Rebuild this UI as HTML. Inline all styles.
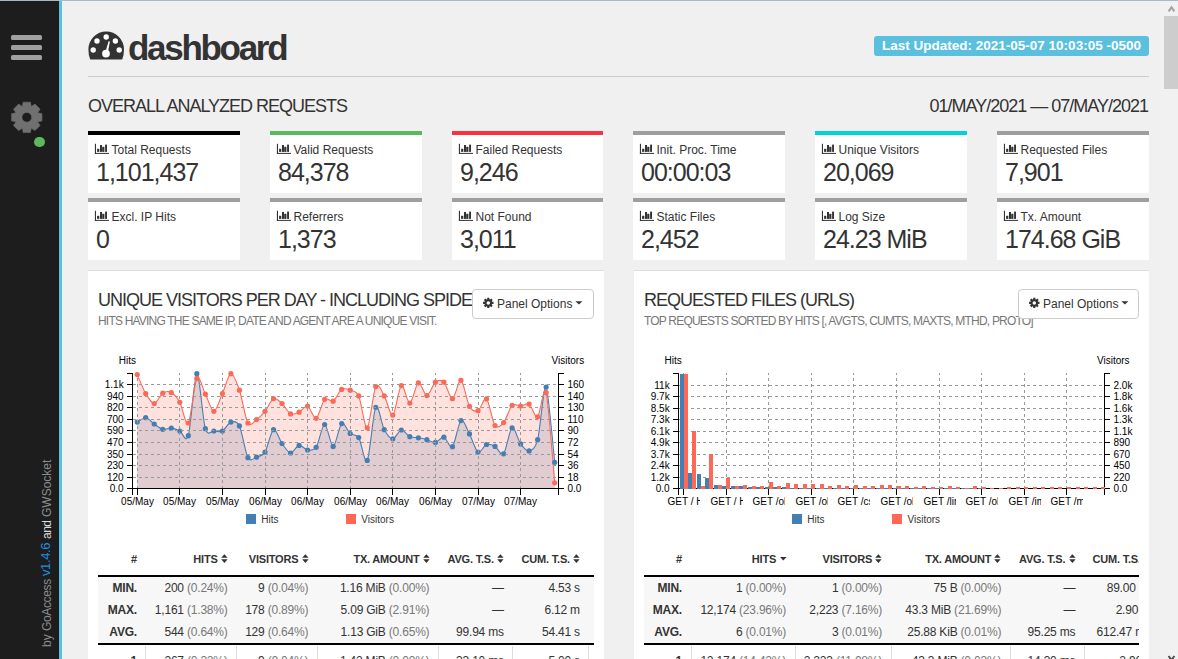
<!DOCTYPE html>
<html><head><meta charset="utf-8">
<style>
*{box-sizing:border-box}
html,body{margin:0;padding:0}
body{width:1178px;height:659px;overflow:hidden;position:relative;background:#f0f0f0;font-family:"Liberation Sans", sans-serif;color:#333}
.abs{position:absolute}
.vt{position:absolute;left:40px;transform:rotate(-90deg);transform-origin:0 0;font-size:12px;line-height:14px;white-space:nowrap}
.card{position:absolute;height:62px;background:#fff;border-top:4px solid #000}
.clab{position:absolute;left:23.5px;top:8px;font-size:12px;line-height:14px;white-space:nowrap}
.cval{position:absolute;left:8px;top:22px;font-size:25px;line-height:30px;letter-spacing:-1px;white-space:nowrap}
.panel{position:absolute;background:#fff;border-top:1px solid #ddd}
.ptitle{position:absolute;font-size:18px;letter-spacing:-1px;white-space:nowrap;line-height:20px}
.psub{position:absolute;font-size:12px;letter-spacing:-0.8px;white-space:nowrap;color:#777;line-height:14px}
.th{position:absolute;top:13px;font-size:11px;line-height:13px;font-weight:bold;white-space:nowrap;letter-spacing:-0.2px}
.td{position:absolute;font-size:12px;line-height:14px;white-space:nowrap;letter-spacing:-0.2px}
.b{font-weight:bold}
.g{color:#777}
.btn{position:absolute;height:30px;border:1px solid #ccc;border-radius:4px;background:#fff;font-size:12px;line-height:28px;white-space:nowrap}
</style></head><body>
<div class="abs" style="left:0;top:0;width:1178px;height:1px;background:#abb9c6"></div>
<div class="abs" style="left:0;top:1px;width:59px;height:658px;background:#1d1d1d"></div>
<div class="abs" style="left:59px;top:1px;width:3px;height:658px;background:#5bc0de"></div>
<div class="abs" style="left:11.2px;top:35px;width:31.2px;height:5px;background:#a0a0a0;border-radius:1.6px"></div>
<div class="abs" style="left:11.2px;top:45px;width:31.2px;height:5px;background:#a0a0a0;border-radius:1.6px"></div>
<div class="abs" style="left:11.2px;top:55.3px;width:31.2px;height:5px;background:#a0a0a0;border-radius:1.6px"></div>
<svg class="abs" style="left:0;top:0" width="59" height="160"><path d="M22.37,106.36L23.17,102.13L30.43,102.13L31.23,106.36L31.40,106.43L34.96,104.00L40.10,109.14L37.67,112.70L37.74,112.87L41.97,113.67L41.97,120.93L37.74,121.73L37.67,121.90L40.10,125.46L34.96,130.60L31.40,128.17L31.23,128.24L30.43,132.47L23.17,132.47L22.37,128.24L22.20,128.17L18.64,130.60L13.50,125.46L15.93,121.90L15.86,121.73L11.63,120.93L11.63,113.67L15.86,112.87L15.93,112.70L13.50,109.14L18.64,104.00L22.20,106.43ZM31.70,117.30A4.9,4.9 0 1 0 21.90,117.30A4.9,4.9 0 1 0 31.70,117.30Z" fill="#707070" fill-rule="evenodd" stroke="#707070" stroke-width="0.6" stroke-linejoin="round"/></svg>
<div class="abs" style="left:34px;top:136.5px;width:10.5px;height:10.5px;border-radius:50%;background:#5cb85c"></div>
<div class="vt" style="top:647px;color:#8c8c8c">by</div>
<div class="vt" style="top:631px;color:#8c8c8c;letter-spacing:-0.35px">GoAccess</div>
<div class="vt" style="left:39px;top:576px;color:#1e90e0;font-size:13px;letter-spacing:-0.4px">v1.4.6</div>
<div class="vt" style="top:539px;color:#dcdcdc;letter-spacing:-0.5px">and</div>
<div class="vt" style="top:517px;color:#8c8c8c;letter-spacing:0px">GWSocket</div>

<!-- header -->
<svg class="abs" style="left:88px;top:31px" width="37" height="29" viewBox="0 0 37 29">
<path d="M18.2,0.5A17.8,17.8 0 0 0 0.4,18.3Q0.4,24 2.2,28.5H34.2Q36,24 36,18.3A17.8,17.8 0 0 0 18.2,0.5Z" fill="#333"/>
<circle cx="18.2" cy="6" r="2.7" fill="#fff"/><circle cx="9" cy="10" r="2.7" fill="#fff"/><circle cx="27.4" cy="10" r="2.7" fill="#fff"/>
<circle cx="5.2" cy="19" r="2.7" fill="#fff"/><circle cx="31.2" cy="19" r="2.7" fill="#fff"/>
<path d="M17,22.5 L20.6,10.2 L21.9,10.4 L19.6,22.8Z" fill="#fff"/><circle cx="18" cy="22.6" r="3.9" fill="#fff"/>
</svg>
<div class="abs" style="left:128px;top:28px;font-size:35px;line-height:40px;font-weight:bold;letter-spacing:-2.3px;white-space:nowrap">dashboard</div>
<div class="abs" style="left:874px;top:36px;width:275px;height:20px;border-radius:3px;background:#5bc0de;color:#fff;font-weight:bold;font-size:13.5px;line-height:20px;text-align:center;white-space:nowrap">Last Updated: 2021-05-07 10:03:05 -0500</div>
<div class="abs" style="left:88px;top:76px;width:1061px;height:1px;background:#ccc"></div>
<div class="abs" style="left:88px;top:96px;font-size:18px;line-height:20px;letter-spacing:-1px;white-space:nowrap">OVERALL ANALYZED REQUESTS</div>
<div class="abs" style="left:880px;top:96px;width:268px;text-align:right;font-size:18px;line-height:20px;letter-spacing:-1px;white-space:nowrap">01/MAY/2021 — 07/MAY/2021</div>
<div class="card" style="left:88px;top:131px;width:152px;border-top-color:#000"><div class="clab">Total Requests</div><div class="cval">1,101,437</div></div>
<svg style="position:absolute;left:94px;top:143px" width="16" height="12" viewBox="0 0 16 12"><g fill="#333"><rect x="0.9" y="0.8" width="1.1" height="10.1"/><rect x="0.9" y="9.9" width="14.1" height="1"/><rect x="3.1" y="5.8" width="2.2" height="3.1"/><rect x="6.0" y="2.0" width="2.0" height="6.9"/><rect x="8.2" y="3.8" width="2.2" height="5.1"/><rect x="11.1" y="1.6" width="1.9" height="7.3"/></g></svg>
<div class="card" style="left:270px;top:131px;width:152px;border-top-color:#5cb85c"><div class="clab">Valid Requests</div><div class="cval">84,378</div></div>
<svg style="position:absolute;left:276px;top:143px" width="16" height="12" viewBox="0 0 16 12"><g fill="#333"><rect x="0.9" y="0.8" width="1.1" height="10.1"/><rect x="0.9" y="9.9" width="14.1" height="1"/><rect x="3.1" y="5.8" width="2.2" height="3.1"/><rect x="6.0" y="2.0" width="2.0" height="6.9"/><rect x="8.2" y="3.8" width="2.2" height="5.1"/><rect x="11.1" y="1.6" width="1.9" height="7.3"/></g></svg>
<div class="card" style="left:452px;top:131px;width:151px;border-top-color:#ff303e"><div class="clab">Failed Requests</div><div class="cval">9,246</div></div>
<svg style="position:absolute;left:458px;top:143px" width="16" height="12" viewBox="0 0 16 12"><g fill="#333"><rect x="0.9" y="0.8" width="1.1" height="10.1"/><rect x="0.9" y="9.9" width="14.1" height="1"/><rect x="3.1" y="5.8" width="2.2" height="3.1"/><rect x="6.0" y="2.0" width="2.0" height="6.9"/><rect x="8.2" y="3.8" width="2.2" height="5.1"/><rect x="11.1" y="1.6" width="1.9" height="7.3"/></g></svg>
<div class="card" style="left:633px;top:131px;width:152px;border-top-color:#9e9e9e"><div class="clab">Init. Proc. Time</div><div class="cval">00:00:03</div></div>
<svg style="position:absolute;left:639px;top:143px" width="16" height="12" viewBox="0 0 16 12"><g fill="#333"><rect x="0.9" y="0.8" width="1.1" height="10.1"/><rect x="0.9" y="9.9" width="14.1" height="1"/><rect x="3.1" y="5.8" width="2.2" height="3.1"/><rect x="6.0" y="2.0" width="2.0" height="6.9"/><rect x="8.2" y="3.8" width="2.2" height="5.1"/><rect x="11.1" y="1.6" width="1.9" height="7.3"/></g></svg>
<div class="card" style="left:815px;top:131px;width:152px;border-top-color:#00d1dc"><div class="clab">Unique Visitors</div><div class="cval">20,069</div></div>
<svg style="position:absolute;left:821px;top:143px" width="16" height="12" viewBox="0 0 16 12"><g fill="#333"><rect x="0.9" y="0.8" width="1.1" height="10.1"/><rect x="0.9" y="9.9" width="14.1" height="1"/><rect x="3.1" y="5.8" width="2.2" height="3.1"/><rect x="6.0" y="2.0" width="2.0" height="6.9"/><rect x="8.2" y="3.8" width="2.2" height="5.1"/><rect x="11.1" y="1.6" width="1.9" height="7.3"/></g></svg>
<div class="card" style="left:997px;top:131px;width:152px;border-top-color:#9e9e9e"><div class="clab">Requested Files</div><div class="cval">7,901</div></div>
<svg style="position:absolute;left:1003px;top:143px" width="16" height="12" viewBox="0 0 16 12"><g fill="#333"><rect x="0.9" y="0.8" width="1.1" height="10.1"/><rect x="0.9" y="9.9" width="14.1" height="1"/><rect x="3.1" y="5.8" width="2.2" height="3.1"/><rect x="6.0" y="2.0" width="2.0" height="6.9"/><rect x="8.2" y="3.8" width="2.2" height="5.1"/><rect x="11.1" y="1.6" width="1.9" height="7.3"/></g></svg>
<div class="card" style="left:88px;top:198px;width:152px;border-top-color:#9e9e9e"><div class="clab">Excl. IP Hits</div><div class="cval">0</div></div>
<svg style="position:absolute;left:94px;top:210px" width="16" height="12" viewBox="0 0 16 12"><g fill="#333"><rect x="0.9" y="0.8" width="1.1" height="10.1"/><rect x="0.9" y="9.9" width="14.1" height="1"/><rect x="3.1" y="5.8" width="2.2" height="3.1"/><rect x="6.0" y="2.0" width="2.0" height="6.9"/><rect x="8.2" y="3.8" width="2.2" height="5.1"/><rect x="11.1" y="1.6" width="1.9" height="7.3"/></g></svg>
<div class="card" style="left:270px;top:198px;width:152px;border-top-color:#9e9e9e"><div class="clab">Referrers</div><div class="cval">1,373</div></div>
<svg style="position:absolute;left:276px;top:210px" width="16" height="12" viewBox="0 0 16 12"><g fill="#333"><rect x="0.9" y="0.8" width="1.1" height="10.1"/><rect x="0.9" y="9.9" width="14.1" height="1"/><rect x="3.1" y="5.8" width="2.2" height="3.1"/><rect x="6.0" y="2.0" width="2.0" height="6.9"/><rect x="8.2" y="3.8" width="2.2" height="5.1"/><rect x="11.1" y="1.6" width="1.9" height="7.3"/></g></svg>
<div class="card" style="left:452px;top:198px;width:151px;border-top-color:#9e9e9e"><div class="clab">Not Found</div><div class="cval">3,011</div></div>
<svg style="position:absolute;left:458px;top:210px" width="16" height="12" viewBox="0 0 16 12"><g fill="#333"><rect x="0.9" y="0.8" width="1.1" height="10.1"/><rect x="0.9" y="9.9" width="14.1" height="1"/><rect x="3.1" y="5.8" width="2.2" height="3.1"/><rect x="6.0" y="2.0" width="2.0" height="6.9"/><rect x="8.2" y="3.8" width="2.2" height="5.1"/><rect x="11.1" y="1.6" width="1.9" height="7.3"/></g></svg>
<div class="card" style="left:633px;top:198px;width:152px;border-top-color:#9e9e9e"><div class="clab">Static Files</div><div class="cval">2,452</div></div>
<svg style="position:absolute;left:639px;top:210px" width="16" height="12" viewBox="0 0 16 12"><g fill="#333"><rect x="0.9" y="0.8" width="1.1" height="10.1"/><rect x="0.9" y="9.9" width="14.1" height="1"/><rect x="3.1" y="5.8" width="2.2" height="3.1"/><rect x="6.0" y="2.0" width="2.0" height="6.9"/><rect x="8.2" y="3.8" width="2.2" height="5.1"/><rect x="11.1" y="1.6" width="1.9" height="7.3"/></g></svg>
<div class="card" style="left:815px;top:198px;width:152px;border-top-color:#9e9e9e"><div class="clab">Log Size</div><div class="cval">24.23 MiB</div></div>
<svg style="position:absolute;left:821px;top:210px" width="16" height="12" viewBox="0 0 16 12"><g fill="#333"><rect x="0.9" y="0.8" width="1.1" height="10.1"/><rect x="0.9" y="9.9" width="14.1" height="1"/><rect x="3.1" y="5.8" width="2.2" height="3.1"/><rect x="6.0" y="2.0" width="2.0" height="6.9"/><rect x="8.2" y="3.8" width="2.2" height="5.1"/><rect x="11.1" y="1.6" width="1.9" height="7.3"/></g></svg>
<div class="card" style="left:997px;top:198px;width:152px;border-top-color:#9e9e9e"><div class="clab">Tx. Amount</div><div class="cval">174.68 GiB</div></div>
<svg style="position:absolute;left:1003px;top:210px" width="16" height="12" viewBox="0 0 16 12"><g fill="#333"><rect x="0.9" y="0.8" width="1.1" height="10.1"/><rect x="0.9" y="9.9" width="14.1" height="1"/><rect x="3.1" y="5.8" width="2.2" height="3.1"/><rect x="6.0" y="2.0" width="2.0" height="6.9"/><rect x="8.2" y="3.8" width="2.2" height="5.1"/><rect x="11.1" y="1.6" width="1.9" height="7.3"/></g></svg>

<!-- panels -->
<div class="panel" style="left:88px;top:270px;width:516px;height:400px"></div>
<div class="panel" style="left:634px;top:270px;width:515px;height:400px"></div>
<div class="ptitle" style="left:98px;top:290px">UNIQUE VISITORS PER DAY - INCLUDING SPIDERS</div>
<div class="psub" style="left:98px;top:314px">HITS HAVING THE SAME IP, DATE AND AGENT ARE A UNIQUE VISIT.</div>
<div class="ptitle" style="left:644px;top:290px">REQUESTED FILES (URLS)</div>
<div class="psub" style="left:644px;top:314px">TOP REQUESTS SORTED BY HITS [, AVGTS, CUMTS, MAXTS, MTHD, PROTO]</div>
<div class="btn" style="left:472px;top:289px;width:122px"></div><svg class="abs" style="left:481px;top:296px" width="14" height="14" viewBox="0 0 14 14"><path d="M6.17,3.17L6.27,1.70L8.33,1.70L8.43,3.17L9.14,3.46L10.24,2.49L11.71,3.96L10.74,5.06L11.03,5.77L12.50,5.87L12.50,7.93L11.03,8.03L10.74,8.74L11.71,9.84L10.24,11.31L9.14,10.34L8.43,10.63L8.33,12.10L6.27,12.10L6.17,10.63L5.46,10.34L4.36,11.31L2.89,9.84L3.86,8.74L3.57,8.03L2.10,7.93L2.10,5.87L3.57,5.77L3.86,5.06L2.89,3.96L4.36,2.49L5.46,3.46ZM9.05,6.90A1.75,1.75 0 1 0 5.55,6.90A1.75,1.75 0 1 0 9.05,6.90Z" fill="#333" fill-rule="evenodd"/></svg><div class="abs" style="left:497px;top:297px;font-size:12px;line-height:14px;white-space:nowrap">Panel Options</div><svg class="abs" style="left:575px;top:301px" width="8" height="4" viewBox="0 0 8 4"><path d="M0.4,0.3H7.4L3.9,3.6Z" fill="#333"/></svg>
<div class="btn" style="left:1018px;top:289px;width:121px"></div><svg class="abs" style="left:1027px;top:296px" width="14" height="14" viewBox="0 0 14 14"><path d="M6.17,3.17L6.27,1.70L8.33,1.70L8.43,3.17L9.14,3.46L10.24,2.49L11.71,3.96L10.74,5.06L11.03,5.77L12.50,5.87L12.50,7.93L11.03,8.03L10.74,8.74L11.71,9.84L10.24,11.31L9.14,10.34L8.43,10.63L8.33,12.10L6.27,12.10L6.17,10.63L5.46,10.34L4.36,11.31L2.89,9.84L3.86,8.74L3.57,8.03L2.10,7.93L2.10,5.87L3.57,5.77L3.86,5.06L2.89,3.96L4.36,2.49L5.46,3.46ZM9.05,6.90A1.75,1.75 0 1 0 5.55,6.90A1.75,1.75 0 1 0 9.05,6.90Z" fill="#333" fill-rule="evenodd"/></svg><div class="abs" style="left:1043px;top:297px;font-size:12px;line-height:14px;white-space:nowrap">Panel Options</div><svg class="abs" style="left:1121px;top:301px" width="8" height="4" viewBox="0 0 8 4"><path d="M0.4,0.3H7.4L3.9,3.6Z" fill="#333"/></svg>
<svg style="position:absolute;left:100px;top:345px" width="500" height="190" viewBox="0 0 500 190">
<path d="M37.20,77.10Q44.02,72.51,45.72,72.70C48.28,72.98,51.68,77.26,54.24,79.00S60.20,83.69,62.76,84.30S68.72,82.85,71.28,83.10S77.24,84.86,79.80,86.00S85.76,99.29,88.32,90.70S94.28,29.75,96.84,28.70S102.80,75.10,105.36,83.70S111.32,85.66,113.88,86.00S119.84,87.33,122.40,86.00S128.36,77.87,130.92,77.10S136.88,75.56,139.44,80.90S145.40,108.00,147.96,112.70S153.92,113.04,156.48,112.20S162.44,111.23,165.00,107.10S170.96,85.99,173.52,84.70S179.48,95.00,182.04,98.50S188.00,107.72,190.56,108.00S196.52,100.85,199.08,100.40S205.04,104.71,207.60,105.00S213.56,106.13,216.12,102.30S222.08,79.64,224.64,79.50S230.60,101.53,233.16,101.40S239.12,80.54,241.68,78.60S247.64,86.40,250.20,88.50S256.16,88.57,258.72,92.60S264.68,119.94,267.24,115.40S273.20,66.91,275.76,62.30S281.72,79.97,284.28,84.70S290.24,93.76,292.80,93.80S298.76,85.31,301.32,85.00S307.28,90.53,309.84,91.70S315.80,92.35,318.36,92.80S324.32,94.01,326.88,94.70S332.84,97.77,335.40,97.40S341.36,91.55,343.92,92.20S349.88,104.19,352.44,101.70S358.40,77.52,360.96,75.60S366.92,84.17,369.48,88.90S375.44,105.51,378.00,107.10S383.96,100.36,386.52,99.50S392.48,100.00,395.04,101.40S401.00,111.59,403.56,108.80S409.52,84.29,412.08,82.80S418.04,95.43,420.60,98.90S426.56,106.53,429.12,105.90S435.08,104.28,437.64,94.70S443.60,38.61,446.16,42.00Q447.86,44.26,454.68,117.30L454.68,143.50L37.20,143.50Z" fill="#447fb3" fill-opacity="0.2"/>
<path d="M37.20,29.60Q44.02,45.71,45.72,48.60C48.28,52.94,51.68,58.56,54.24,58.50S60.20,49.85,62.76,48.20S68.72,46.13,71.28,47.50S77.24,52.73,79.80,57.30S85.76,81.59,88.32,78.00S94.28,37.75,96.84,33.40S102.80,44.06,105.36,49.00S111.32,66.36,113.88,66.30S119.84,54.24,122.40,48.60S128.36,29.21,130.92,28.70S136.88,37.80,139.44,45.20S145.40,73.59,147.96,78.00S153.92,76.36,156.48,74.60S162.44,69.44,165.00,66.30S170.96,54.87,173.52,53.70S179.48,56.22,182.04,58.50S188.00,67.59,190.56,68.90S196.52,68.38,199.08,67.20S205.04,60.08,207.60,61.00S213.56,74.31,216.12,73.30S222.08,56.87,224.64,54.30S230.60,57.68,233.16,56.20S239.12,46.05,241.68,44.40S247.64,44.22,250.20,45.20S256.16,45.26,258.72,50.90S264.68,84.20,267.24,82.80S273.20,46.39,275.76,41.60S281.72,46.62,284.28,50.90S290.24,71.65,292.80,70.10S298.76,42.40,301.32,40.60S307.28,58.52,309.84,58.10S315.80,38.94,318.36,37.80S324.32,50.59,326.88,50.50S332.84,39.19,335.40,37.20S341.36,34.72,343.92,37.20S349.88,53.98,352.44,53.70S358.40,34.16,360.96,35.30S366.92,56.74,369.48,61.30S375.44,66.81,378.00,65.70S383.96,51.68,386.52,53.90S392.48,76.94,395.04,80.50S401.00,80.62,403.56,77.60S409.52,62.89,412.08,60.40S418.04,61.19,420.60,61.00S426.56,57.48,429.12,59.10S435.08,73.51,437.64,71.80S443.60,37.80,446.16,47.70Q447.86,54.30,454.68,137.80L454.68,143.50L37.20,143.50Z" fill="#ff6854" fill-opacity="0.2"/>
<path d="M37.20,77.10Q44.02,72.51,45.72,72.70C48.28,72.98,51.68,77.26,54.24,79.00S60.20,83.69,62.76,84.30S68.72,82.85,71.28,83.10S77.24,84.86,79.80,86.00S85.76,99.29,88.32,90.70S94.28,29.75,96.84,28.70S102.80,75.10,105.36,83.70S111.32,85.66,113.88,86.00S119.84,87.33,122.40,86.00S128.36,77.87,130.92,77.10S136.88,75.56,139.44,80.90S145.40,108.00,147.96,112.70S153.92,113.04,156.48,112.20S162.44,111.23,165.00,107.10S170.96,85.99,173.52,84.70S179.48,95.00,182.04,98.50S188.00,107.72,190.56,108.00S196.52,100.85,199.08,100.40S205.04,104.71,207.60,105.00S213.56,106.13,216.12,102.30S222.08,79.64,224.64,79.50S230.60,101.53,233.16,101.40S239.12,80.54,241.68,78.60S247.64,86.40,250.20,88.50S256.16,88.57,258.72,92.60S264.68,119.94,267.24,115.40S273.20,66.91,275.76,62.30S281.72,79.97,284.28,84.70S290.24,93.76,292.80,93.80S298.76,85.31,301.32,85.00S307.28,90.53,309.84,91.70S315.80,92.35,318.36,92.80S324.32,94.01,326.88,94.70S332.84,97.77,335.40,97.40S341.36,91.55,343.92,92.20S349.88,104.19,352.44,101.70S358.40,77.52,360.96,75.60S366.92,84.17,369.48,88.90S375.44,105.51,378.00,107.10S383.96,100.36,386.52,99.50S392.48,100.00,395.04,101.40S401.00,111.59,403.56,108.80S409.52,84.29,412.08,82.80S418.04,95.43,420.60,98.90S426.56,106.53,429.12,105.90S435.08,104.28,437.64,94.70S443.60,38.61,446.16,42.00Q447.86,44.26,454.68,117.30" fill="none" stroke="#447fb3" stroke-width="1.1"/>
<path d="M37.20,29.60Q44.02,45.71,45.72,48.60C48.28,52.94,51.68,58.56,54.24,58.50S60.20,49.85,62.76,48.20S68.72,46.13,71.28,47.50S77.24,52.73,79.80,57.30S85.76,81.59,88.32,78.00S94.28,37.75,96.84,33.40S102.80,44.06,105.36,49.00S111.32,66.36,113.88,66.30S119.84,54.24,122.40,48.60S128.36,29.21,130.92,28.70S136.88,37.80,139.44,45.20S145.40,73.59,147.96,78.00S153.92,76.36,156.48,74.60S162.44,69.44,165.00,66.30S170.96,54.87,173.52,53.70S179.48,56.22,182.04,58.50S188.00,67.59,190.56,68.90S196.52,68.38,199.08,67.20S205.04,60.08,207.60,61.00S213.56,74.31,216.12,73.30S222.08,56.87,224.64,54.30S230.60,57.68,233.16,56.20S239.12,46.05,241.68,44.40S247.64,44.22,250.20,45.20S256.16,45.26,258.72,50.90S264.68,84.20,267.24,82.80S273.20,46.39,275.76,41.60S281.72,46.62,284.28,50.90S290.24,71.65,292.80,70.10S298.76,42.40,301.32,40.60S307.28,58.52,309.84,58.10S315.80,38.94,318.36,37.80S324.32,50.59,326.88,50.50S332.84,39.19,335.40,37.20S341.36,34.72,343.92,37.20S349.88,53.98,352.44,53.70S358.40,34.16,360.96,35.30S366.92,56.74,369.48,61.30S375.44,66.81,378.00,65.70S383.96,51.68,386.52,53.90S392.48,76.94,395.04,80.50S401.00,80.62,403.56,77.60S409.52,62.89,412.08,60.40S418.04,61.19,420.60,61.00S426.56,57.48,429.12,59.10S435.08,73.51,437.64,71.80S443.60,37.80,446.16,47.70Q447.86,54.30,454.68,137.80" fill="none" stroke="#ff6854" stroke-width="1.1"/>
<circle cx="37.20" cy="77.10" r="2.6" fill="#447fb3"/>
<circle cx="45.72" cy="72.70" r="2.6" fill="#447fb3"/>
<circle cx="54.24" cy="79.00" r="2.6" fill="#447fb3"/>
<circle cx="62.76" cy="84.30" r="2.6" fill="#447fb3"/>
<circle cx="71.28" cy="83.10" r="2.6" fill="#447fb3"/>
<circle cx="79.80" cy="86.00" r="2.6" fill="#447fb3"/>
<circle cx="88.32" cy="90.70" r="2.6" fill="#447fb3"/>
<circle cx="96.84" cy="28.70" r="2.6" fill="#447fb3"/>
<circle cx="105.36" cy="83.70" r="2.6" fill="#447fb3"/>
<circle cx="113.88" cy="86.00" r="2.6" fill="#447fb3"/>
<circle cx="122.40" cy="86.00" r="2.6" fill="#447fb3"/>
<circle cx="130.92" cy="77.10" r="2.6" fill="#447fb3"/>
<circle cx="139.44" cy="80.90" r="2.6" fill="#447fb3"/>
<circle cx="147.96" cy="112.70" r="2.6" fill="#447fb3"/>
<circle cx="156.48" cy="112.20" r="2.6" fill="#447fb3"/>
<circle cx="165.00" cy="107.10" r="2.6" fill="#447fb3"/>
<circle cx="173.52" cy="84.70" r="2.6" fill="#447fb3"/>
<circle cx="182.04" cy="98.50" r="2.6" fill="#447fb3"/>
<circle cx="190.56" cy="108.00" r="2.6" fill="#447fb3"/>
<circle cx="199.08" cy="100.40" r="2.6" fill="#447fb3"/>
<circle cx="207.60" cy="105.00" r="2.6" fill="#447fb3"/>
<circle cx="216.12" cy="102.30" r="2.6" fill="#447fb3"/>
<circle cx="224.64" cy="79.50" r="2.6" fill="#447fb3"/>
<circle cx="233.16" cy="101.40" r="2.6" fill="#447fb3"/>
<circle cx="241.68" cy="78.60" r="2.6" fill="#447fb3"/>
<circle cx="250.20" cy="88.50" r="2.6" fill="#447fb3"/>
<circle cx="258.72" cy="92.60" r="2.6" fill="#447fb3"/>
<circle cx="267.24" cy="115.40" r="2.6" fill="#447fb3"/>
<circle cx="275.76" cy="62.30" r="2.6" fill="#447fb3"/>
<circle cx="284.28" cy="84.70" r="2.6" fill="#447fb3"/>
<circle cx="292.80" cy="93.80" r="2.6" fill="#447fb3"/>
<circle cx="301.32" cy="85.00" r="2.6" fill="#447fb3"/>
<circle cx="309.84" cy="91.70" r="2.6" fill="#447fb3"/>
<circle cx="318.36" cy="92.80" r="2.6" fill="#447fb3"/>
<circle cx="326.88" cy="94.70" r="2.6" fill="#447fb3"/>
<circle cx="335.40" cy="97.40" r="2.6" fill="#447fb3"/>
<circle cx="343.92" cy="92.20" r="2.6" fill="#447fb3"/>
<circle cx="352.44" cy="101.70" r="2.6" fill="#447fb3"/>
<circle cx="360.96" cy="75.60" r="2.6" fill="#447fb3"/>
<circle cx="369.48" cy="88.90" r="2.6" fill="#447fb3"/>
<circle cx="378.00" cy="107.10" r="2.6" fill="#447fb3"/>
<circle cx="386.52" cy="99.50" r="2.6" fill="#447fb3"/>
<circle cx="395.04" cy="101.40" r="2.6" fill="#447fb3"/>
<circle cx="403.56" cy="108.80" r="2.6" fill="#447fb3"/>
<circle cx="412.08" cy="82.80" r="2.6" fill="#447fb3"/>
<circle cx="420.60" cy="98.90" r="2.6" fill="#447fb3"/>
<circle cx="429.12" cy="105.90" r="2.6" fill="#447fb3"/>
<circle cx="437.64" cy="94.70" r="2.6" fill="#447fb3"/>
<circle cx="446.16" cy="42.00" r="2.6" fill="#447fb3"/>
<circle cx="454.68" cy="117.30" r="2.6" fill="#447fb3"/>
<circle cx="37.20" cy="29.60" r="2.6" fill="#ff6854"/>
<circle cx="45.72" cy="48.60" r="2.6" fill="#ff6854"/>
<circle cx="54.24" cy="58.50" r="2.6" fill="#ff6854"/>
<circle cx="62.76" cy="48.20" r="2.6" fill="#ff6854"/>
<circle cx="71.28" cy="47.50" r="2.6" fill="#ff6854"/>
<circle cx="79.80" cy="57.30" r="2.6" fill="#ff6854"/>
<circle cx="88.32" cy="78.00" r="2.6" fill="#ff6854"/>
<circle cx="96.84" cy="33.40" r="2.6" fill="#ff6854"/>
<circle cx="105.36" cy="49.00" r="2.6" fill="#ff6854"/>
<circle cx="113.88" cy="66.30" r="2.6" fill="#ff6854"/>
<circle cx="122.40" cy="48.60" r="2.6" fill="#ff6854"/>
<circle cx="130.92" cy="28.70" r="2.6" fill="#ff6854"/>
<circle cx="139.44" cy="45.20" r="2.6" fill="#ff6854"/>
<circle cx="147.96" cy="78.00" r="2.6" fill="#ff6854"/>
<circle cx="156.48" cy="74.60" r="2.6" fill="#ff6854"/>
<circle cx="165.00" cy="66.30" r="2.6" fill="#ff6854"/>
<circle cx="173.52" cy="53.70" r="2.6" fill="#ff6854"/>
<circle cx="182.04" cy="58.50" r="2.6" fill="#ff6854"/>
<circle cx="190.56" cy="68.90" r="2.6" fill="#ff6854"/>
<circle cx="199.08" cy="67.20" r="2.6" fill="#ff6854"/>
<circle cx="207.60" cy="61.00" r="2.6" fill="#ff6854"/>
<circle cx="216.12" cy="73.30" r="2.6" fill="#ff6854"/>
<circle cx="224.64" cy="54.30" r="2.6" fill="#ff6854"/>
<circle cx="233.16" cy="56.20" r="2.6" fill="#ff6854"/>
<circle cx="241.68" cy="44.40" r="2.6" fill="#ff6854"/>
<circle cx="250.20" cy="45.20" r="2.6" fill="#ff6854"/>
<circle cx="258.72" cy="50.90" r="2.6" fill="#ff6854"/>
<circle cx="267.24" cy="82.80" r="2.6" fill="#ff6854"/>
<circle cx="275.76" cy="41.60" r="2.6" fill="#ff6854"/>
<circle cx="284.28" cy="50.90" r="2.6" fill="#ff6854"/>
<circle cx="292.80" cy="70.10" r="2.6" fill="#ff6854"/>
<circle cx="301.32" cy="40.60" r="2.6" fill="#ff6854"/>
<circle cx="309.84" cy="58.10" r="2.6" fill="#ff6854"/>
<circle cx="318.36" cy="37.80" r="2.6" fill="#ff6854"/>
<circle cx="326.88" cy="50.50" r="2.6" fill="#ff6854"/>
<circle cx="335.40" cy="37.20" r="2.6" fill="#ff6854"/>
<circle cx="343.92" cy="37.20" r="2.6" fill="#ff6854"/>
<circle cx="352.44" cy="53.70" r="2.6" fill="#ff6854"/>
<circle cx="360.96" cy="35.30" r="2.6" fill="#ff6854"/>
<circle cx="369.48" cy="61.30" r="2.6" fill="#ff6854"/>
<circle cx="378.00" cy="65.70" r="2.6" fill="#ff6854"/>
<circle cx="386.52" cy="53.90" r="2.6" fill="#ff6854"/>
<circle cx="395.04" cy="80.50" r="2.6" fill="#ff6854"/>
<circle cx="403.56" cy="77.60" r="2.6" fill="#ff6854"/>
<circle cx="412.08" cy="60.40" r="2.6" fill="#ff6854"/>
<circle cx="420.60" cy="61.00" r="2.6" fill="#ff6854"/>
<circle cx="429.12" cy="59.10" r="2.6" fill="#ff6854"/>
<circle cx="437.64" cy="71.80" r="2.6" fill="#ff6854"/>
<circle cx="446.16" cy="47.70" r="2.6" fill="#ff6854"/>
<circle cx="454.68" cy="137.80" r="2.6" fill="#ff6854"/>
<g font-family='"Liberation Sans", sans-serif' font-size="10" fill="#000" shape-rendering="crispEdges">
<line x1="33" x2="458" y1="132.5" y2="132.5" stroke="#999" stroke-dasharray="3,3"/>
<line x1="33" x2="458" y1="120.5" y2="120.5" stroke="#999" stroke-dasharray="3,3"/>
<line x1="33" x2="458" y1="109.5" y2="109.5" stroke="#999" stroke-dasharray="3,3"/>
<line x1="33" x2="458" y1="97.5" y2="97.5" stroke="#999" stroke-dasharray="3,3"/>
<line x1="33" x2="458" y1="85.5" y2="85.5" stroke="#999" stroke-dasharray="3,3"/>
<line x1="33" x2="458" y1="74.5" y2="74.5" stroke="#999" stroke-dasharray="3,3"/>
<line x1="33" x2="458" y1="62.5" y2="62.5" stroke="#999" stroke-dasharray="3,3"/>
<line x1="33" x2="458" y1="51.5" y2="51.5" stroke="#999" stroke-dasharray="3,3"/>
<line x1="33" x2="458" y1="39.5" y2="39.5" stroke="#999" stroke-dasharray="3,3"/>
<line x1="37.5" x2="37.5" y1="144" y2="28" stroke="#999" stroke-dasharray="3,3"/>
<line x1="79.5" x2="79.5" y1="144" y2="28" stroke="#999" stroke-dasharray="3,3"/>
<line x1="122.5" x2="122.5" y1="144" y2="28" stroke="#999" stroke-dasharray="3,3"/>
<line x1="165.5" x2="165.5" y1="144" y2="28" stroke="#999" stroke-dasharray="3,3"/>
<line x1="207.5" x2="207.5" y1="144" y2="28" stroke="#999" stroke-dasharray="3,3"/>
<line x1="250.5" x2="250.5" y1="144" y2="28" stroke="#999" stroke-dasharray="3,3"/>
<line x1="292.5" x2="292.5" y1="144" y2="28" stroke="#999" stroke-dasharray="3,3"/>
<line x1="335.5" x2="335.5" y1="144" y2="28" stroke="#999" stroke-dasharray="3,3"/>
<line x1="378.5" x2="378.5" y1="144" y2="28" stroke="#999" stroke-dasharray="3,3"/>
<line x1="420.5" x2="420.5" y1="144" y2="28" stroke="#999" stroke-dasharray="3,3"/>
<rect x="32" y="28" width="1" height="116" fill="#000"/>
<rect x="458" y="28" width="1" height="116" fill="#000"/>
<rect x="27" y="28" width="6" height="1" fill="#000"/>
<rect x="458" y="28" width="6" height="1" fill="#000"/>
<rect x="32" y="143" width="427" height="1" fill="#000"/>
<rect x="32" y="143" width="1" height="7" fill="#000"/>
<rect x="458" y="143" width="1" height="7" fill="#000"/>
<rect x="27" y="143" width="6" height="1" fill="#000"/>
<rect x="458" y="143" width="6" height="1" fill="#000"/>
<text x="23.7" y="147.0" text-anchor="end">0.0</text>
<text x="467.5" y="147.0">0.0</text>
<rect x="27" y="132" width="6" height="1" fill="#000"/>
<rect x="458" y="132" width="6" height="1" fill="#000"/>
<text x="23.7" y="136.0" text-anchor="end">120</text>
<text x="467.5" y="136.0">18</text>
<rect x="27" y="120" width="6" height="1" fill="#000"/>
<rect x="458" y="120" width="6" height="1" fill="#000"/>
<text x="23.7" y="124.0" text-anchor="end">230</text>
<text x="467.5" y="124.0">36</text>
<rect x="27" y="109" width="6" height="1" fill="#000"/>
<rect x="458" y="109" width="6" height="1" fill="#000"/>
<text x="23.7" y="113.0" text-anchor="end">350</text>
<text x="467.5" y="113.0">54</text>
<rect x="27" y="97" width="6" height="1" fill="#000"/>
<rect x="458" y="97" width="6" height="1" fill="#000"/>
<text x="23.7" y="101.0" text-anchor="end">470</text>
<text x="467.5" y="101.0">72</text>
<rect x="27" y="85" width="6" height="1" fill="#000"/>
<rect x="458" y="85" width="6" height="1" fill="#000"/>
<text x="23.7" y="89.0" text-anchor="end">590</text>
<text x="467.5" y="89.0">90</text>
<rect x="27" y="74" width="6" height="1" fill="#000"/>
<rect x="458" y="74" width="6" height="1" fill="#000"/>
<text x="23.7" y="78.0" text-anchor="end">700</text>
<text x="467.5" y="78.0">110</text>
<rect x="27" y="62" width="6" height="1" fill="#000"/>
<rect x="458" y="62" width="6" height="1" fill="#000"/>
<text x="23.7" y="66.0" text-anchor="end">820</text>
<text x="467.5" y="66.0">130</text>
<rect x="27" y="51" width="6" height="1" fill="#000"/>
<rect x="458" y="51" width="6" height="1" fill="#000"/>
<text x="23.7" y="55.0" text-anchor="end">940</text>
<text x="467.5" y="55.0">140</text>
<rect x="27" y="39" width="6" height="1" fill="#000"/>
<rect x="458" y="39" width="6" height="1" fill="#000"/>
<text x="23.7" y="43.0" text-anchor="end">1.1k</text>
<text x="467.5" y="43.0">160</text>
<rect x="37" y="143" width="1" height="7" fill="#000"/>
<text x="37.5" y="159.5" text-anchor="middle">05/May</text>
<rect x="79" y="143" width="1" height="7" fill="#000"/>
<text x="79.5" y="159.5" text-anchor="middle">05/May</text>
<rect x="122" y="143" width="1" height="7" fill="#000"/>
<text x="122.5" y="159.5" text-anchor="middle">05/May</text>
<rect x="165" y="143" width="1" height="7" fill="#000"/>
<text x="165.5" y="159.5" text-anchor="middle">06/May</text>
<rect x="207" y="143" width="1" height="7" fill="#000"/>
<text x="207.5" y="159.5" text-anchor="middle">06/May</text>
<rect x="250" y="143" width="1" height="7" fill="#000"/>
<text x="250.5" y="159.5" text-anchor="middle">06/May</text>
<rect x="292" y="143" width="1" height="7" fill="#000"/>
<text x="292.5" y="159.5" text-anchor="middle">06/May</text>
<rect x="335" y="143" width="1" height="7" fill="#000"/>
<text x="335.5" y="159.5" text-anchor="middle">06/May</text>
<rect x="378" y="143" width="1" height="7" fill="#000"/>
<text x="378.5" y="159.5" text-anchor="middle">07/May</text>
<rect x="420" y="143" width="1" height="7" fill="#000"/>
<text x="420.5" y="159.5" text-anchor="middle">07/May</text>
<text x="18.8" y="18.8">Hits</text>
<text x="451.6" y="18.8">Visitors</text>
</g></svg>
<svg style="position:absolute;left:640px;top:345px" width="500" height="190" viewBox="0 0 500 190">
<g font-family='"Liberation Sans", sans-serif' font-size="10" fill="#000" shape-rendering="crispEdges">
<line x1="39" x2="464" y1="132.5" y2="132.5" stroke="#999" stroke-dasharray="3,3"/>
<line x1="39" x2="464" y1="120.5" y2="120.5" stroke="#999" stroke-dasharray="3,3"/>
<line x1="39" x2="464" y1="109.5" y2="109.5" stroke="#999" stroke-dasharray="3,3"/>
<line x1="39" x2="464" y1="97.5" y2="97.5" stroke="#999" stroke-dasharray="3,3"/>
<line x1="39" x2="464" y1="86.5" y2="86.5" stroke="#999" stroke-dasharray="3,3"/>
<line x1="39" x2="464" y1="74.5" y2="74.5" stroke="#999" stroke-dasharray="3,3"/>
<line x1="39" x2="464" y1="63.5" y2="63.5" stroke="#999" stroke-dasharray="3,3"/>
<line x1="39" x2="464" y1="51.5" y2="51.5" stroke="#999" stroke-dasharray="3,3"/>
<line x1="39" x2="464" y1="40.5" y2="40.5" stroke="#999" stroke-dasharray="3,3"/>
<line x1="43.5" x2="43.5" y1="144" y2="28" stroke="#999" stroke-dasharray="3,3"/>
<line x1="86.5" x2="86.5" y1="144" y2="28" stroke="#999" stroke-dasharray="3,3"/>
<line x1="128.5" x2="128.5" y1="144" y2="28" stroke="#999" stroke-dasharray="3,3"/>
<line x1="171.5" x2="171.5" y1="144" y2="28" stroke="#999" stroke-dasharray="3,3"/>
<line x1="213.5" x2="213.5" y1="144" y2="28" stroke="#999" stroke-dasharray="3,3"/>
<line x1="256.5" x2="256.5" y1="144" y2="28" stroke="#999" stroke-dasharray="3,3"/>
<line x1="299.5" x2="299.5" y1="144" y2="28" stroke="#999" stroke-dasharray="3,3"/>
<line x1="341.5" x2="341.5" y1="144" y2="28" stroke="#999" stroke-dasharray="3,3"/>
<line x1="384.5" x2="384.5" y1="144" y2="28" stroke="#999" stroke-dasharray="3,3"/>
<line x1="426.5" x2="426.5" y1="144" y2="28" stroke="#999" stroke-dasharray="3,3"/>
<rect x="38" y="28" width="1" height="116" fill="#000"/>
<rect x="464" y="28" width="1" height="116" fill="#000"/>
<rect x="33" y="28" width="6" height="1" fill="#000"/>
<rect x="464" y="28" width="6" height="1" fill="#000"/>
<rect x="38" y="143" width="427" height="1" fill="#000"/>
<rect x="38" y="143" width="1" height="7" fill="#000"/>
<rect x="464" y="143" width="1" height="7" fill="#000"/>
<rect x="33" y="143" width="6" height="1" fill="#000"/>
<rect x="464" y="143" width="6" height="1" fill="#000"/>
<text x="29.7" y="147.0" text-anchor="end">0.0</text>
<text x="473.5" y="147.0">0.0</text>
<rect x="33" y="132" width="6" height="1" fill="#000"/>
<rect x="464" y="132" width="6" height="1" fill="#000"/>
<text x="29.7" y="136.0" text-anchor="end">1.2k</text>
<text x="473.5" y="136.0">220</text>
<rect x="33" y="120" width="6" height="1" fill="#000"/>
<rect x="464" y="120" width="6" height="1" fill="#000"/>
<text x="29.7" y="124.0" text-anchor="end">2.4k</text>
<text x="473.5" y="124.0">450</text>
<rect x="33" y="109" width="6" height="1" fill="#000"/>
<rect x="464" y="109" width="6" height="1" fill="#000"/>
<text x="29.7" y="113.0" text-anchor="end">3.7k</text>
<text x="473.5" y="113.0">670</text>
<rect x="33" y="97" width="6" height="1" fill="#000"/>
<rect x="464" y="97" width="6" height="1" fill="#000"/>
<text x="29.7" y="101.0" text-anchor="end">4.9k</text>
<text x="473.5" y="101.0">890</text>
<rect x="33" y="86" width="6" height="1" fill="#000"/>
<rect x="464" y="86" width="6" height="1" fill="#000"/>
<text x="29.7" y="90.0" text-anchor="end">6.1k</text>
<text x="473.5" y="90.0">1.1k</text>
<rect x="33" y="74" width="6" height="1" fill="#000"/>
<rect x="464" y="74" width="6" height="1" fill="#000"/>
<text x="29.7" y="78.0" text-anchor="end">7.3k</text>
<text x="473.5" y="78.0">1.3k</text>
<rect x="33" y="63" width="6" height="1" fill="#000"/>
<rect x="464" y="63" width="6" height="1" fill="#000"/>
<text x="29.7" y="67.0" text-anchor="end">8.5k</text>
<text x="473.5" y="67.0">1.6k</text>
<rect x="33" y="51" width="6" height="1" fill="#000"/>
<rect x="464" y="51" width="6" height="1" fill="#000"/>
<text x="29.7" y="55.0" text-anchor="end">9.7k</text>
<text x="473.5" y="55.0">1.8k</text>
<rect x="33" y="40" width="6" height="1" fill="#000"/>
<rect x="464" y="40" width="6" height="1" fill="#000"/>
<text x="29.7" y="44.0" text-anchor="end">11k</text>
<text x="473.5" y="44.0">2.0k</text>
<rect x="43" y="143" width="1" height="7" fill="#000"/>
<clipPath id="xc0"><rect x="26.9" y="145.0" width="33" height="20"/></clipPath>
<text x="27.6" y="159.5" clip-path="url(#xc0)">GET / HTTP</text>
<rect x="86" y="143" width="1" height="7" fill="#000"/>
<clipPath id="xc1"><rect x="69.9" y="145.0" width="33" height="20"/></clipPath>
<text x="70.6" y="159.5" clip-path="url(#xc1)">GET / HTTP</text>
<rect x="128" y="143" width="1" height="7" fill="#000"/>
<clipPath id="xc2"><rect x="111.9" y="145.0" width="33" height="20"/></clipPath>
<text x="112.6" y="159.5" clip-path="url(#xc2)">GET /olx</text>
<rect x="171" y="143" width="1" height="7" fill="#000"/>
<clipPath id="xc3"><rect x="154.9" y="145.0" width="33" height="20"/></clipPath>
<text x="155.6" y="159.5" clip-path="url(#xc3)">GET /olx</text>
<rect x="213" y="143" width="1" height="7" fill="#000"/>
<clipPath id="xc4"><rect x="196.9" y="145.0" width="33" height="20"/></clipPath>
<text x="197.6" y="159.5" clip-path="url(#xc4)">GET /css</text>
<rect x="256" y="143" width="1" height="7" fill="#000"/>
<clipPath id="xc5"><rect x="239.9" y="145.0" width="33" height="20"/></clipPath>
<text x="240.6" y="159.5" clip-path="url(#xc5)">GET /olx</text>
<rect x="299" y="143" width="1" height="7" fill="#000"/>
<clipPath id="xc6"><rect x="282.9" y="145.0" width="33" height="20"/></clipPath>
<text x="283.6" y="159.5" clip-path="url(#xc6)">GET /link</text>
<rect x="341" y="143" width="1" height="7" fill="#000"/>
<clipPath id="xc7"><rect x="324.9" y="145.0" width="33" height="20"/></clipPath>
<text x="325.6" y="159.5" clip-path="url(#xc7)">GET /olx</text>
<rect x="384" y="143" width="1" height="7" fill="#000"/>
<clipPath id="xc8"><rect x="367.9" y="145.0" width="33" height="20"/></clipPath>
<text x="368.6" y="159.5" clip-path="url(#xc8)">GET /img</text>
<rect x="426" y="143" width="1" height="7" fill="#000"/>
<clipPath id="xc9"><rect x="409.9" y="145.0" width="33" height="20"/></clipPath>
<text x="410.6" y="159.5" clip-path="url(#xc9)">GET /mm</text>
<text x="24.5" y="18.8">Hits</text>
<text x="457.0" y="18.8">Visitors</text>
<rect x="40" y="29" width="4" height="115" fill="#447fb3"/>
<rect x="44" y="29" width="4" height="115" fill="#ff6854"/>
<rect x="48" y="128" width="4" height="16" fill="#447fb3"/>
<rect x="52" y="86" width="4" height="58" fill="#ff6854"/>
<rect x="57" y="129" width="4" height="15" fill="#447fb3"/>
<rect x="61" y="141" width="4" height="3" fill="#ff6854"/>
<rect x="65" y="133" width="4" height="11" fill="#447fb3"/>
<rect x="69" y="109" width="4" height="35" fill="#ff6854"/>
<rect x="74" y="140" width="4" height="4" fill="#447fb3"/>
<rect x="78" y="140" width="4" height="4" fill="#ff6854"/>
<rect x="82" y="141" width="4" height="3" fill="#447fb3"/>
<rect x="86" y="133" width="4" height="11" fill="#ff6854"/>
<rect x="91" y="141" width="4" height="3" fill="#447fb3"/>
<rect x="95" y="141" width="4" height="3" fill="#ff6854"/>
<rect x="99" y="141" width="4" height="3" fill="#447fb3"/>
<rect x="103" y="140" width="4" height="4" fill="#ff6854"/>
<rect x="108" y="142" width="4" height="2" fill="#447fb3"/>
<rect x="112" y="141" width="4" height="3" fill="#ff6854"/>
<rect x="116" y="142" width="4" height="2" fill="#447fb3"/>
<rect x="120" y="141" width="4" height="3" fill="#ff6854"/>
<rect x="125" y="142" width="4" height="2" fill="#447fb3"/>
<rect x="129" y="137" width="4" height="7" fill="#ff6854"/>
<rect x="133" y="142" width="4" height="2" fill="#447fb3"/>
<rect x="137" y="141" width="4" height="3" fill="#ff6854"/>
<rect x="142" y="142" width="4" height="2" fill="#447fb3"/>
<rect x="146" y="138" width="4" height="6" fill="#ff6854"/>
<rect x="150" y="143" width="4" height="1" fill="#447fb3"/>
<rect x="154" y="139" width="4" height="5" fill="#ff6854"/>
<rect x="159" y="143" width="4" height="1" fill="#447fb3"/>
<rect x="163" y="139" width="4" height="5" fill="#ff6854"/>
<rect x="167" y="143" width="4" height="1" fill="#447fb3"/>
<rect x="171" y="139" width="4" height="5" fill="#ff6854"/>
<rect x="176" y="143" width="4" height="1" fill="#447fb3"/>
<rect x="180" y="139" width="4" height="5" fill="#ff6854"/>
<rect x="184" y="143" width="4" height="1" fill="#447fb3"/>
<rect x="188" y="141" width="4" height="3" fill="#ff6854"/>
<rect x="193" y="143" width="4" height="1" fill="#447fb3"/>
<rect x="197" y="140" width="4" height="4" fill="#ff6854"/>
<rect x="201" y="143" width="4" height="1" fill="#447fb3"/>
<rect x="205" y="141" width="4" height="3" fill="#ff6854"/>
<rect x="210" y="143" width="4" height="1" fill="#447fb3"/>
<rect x="214" y="140" width="4" height="4" fill="#ff6854"/>
<rect x="219" y="143" width="4" height="1" fill="#447fb3"/>
<rect x="223" y="141" width="4" height="3" fill="#ff6854"/>
<rect x="227" y="143" width="4" height="1" fill="#447fb3"/>
<rect x="231" y="141" width="4" height="3" fill="#ff6854"/>
<rect x="236" y="143" width="4" height="1" fill="#447fb3"/>
<rect x="240" y="140" width="4" height="4" fill="#ff6854"/>
<rect x="244" y="143" width="4" height="1" fill="#447fb3"/>
<rect x="248" y="140" width="4" height="4" fill="#ff6854"/>
<rect x="253" y="143" width="4" height="1" fill="#447fb3"/>
<rect x="257" y="141" width="4" height="3" fill="#ff6854"/>
<rect x="261" y="143" width="4" height="1" fill="#447fb3"/>
<rect x="265" y="141" width="4" height="3" fill="#ff6854"/>
<rect x="270" y="143" width="4" height="1" fill="#447fb3"/>
<rect x="274" y="142" width="4" height="2" fill="#ff6854"/>
<rect x="278" y="143" width="4" height="1" fill="#447fb3"/>
<rect x="282" y="141" width="4" height="3" fill="#ff6854"/>
<rect x="287" y="143" width="4" height="1" fill="#447fb3"/>
<rect x="291" y="142" width="4" height="2" fill="#ff6854"/>
<rect x="295" y="143" width="4" height="1" fill="#447fb3"/>
<rect x="299" y="142" width="4" height="2" fill="#ff6854"/>
<rect x="304" y="143" width="4" height="1" fill="#447fb3"/>
<rect x="308" y="141" width="4" height="3" fill="#ff6854"/>
<rect x="312" y="143" width="4" height="1" fill="#447fb3"/>
<rect x="316" y="142" width="4" height="2" fill="#ff6854"/>
<rect x="321" y="143" width="4" height="1" fill="#447fb3"/>
<rect x="325" y="143" width="4" height="1" fill="#ff6854"/>
<rect x="329" y="143" width="4" height="1" fill="#447fb3"/>
<rect x="333" y="141" width="4" height="3" fill="#ff6854"/>
<rect x="338" y="143" width="4" height="1" fill="#447fb3"/>
<rect x="342" y="142" width="4" height="2" fill="#ff6854"/>
<rect x="350" y="143" width="4" height="1" fill="#ff6854"/>
<rect x="359" y="143" width="4" height="1" fill="#ff6854"/>
<rect x="367" y="142" width="4" height="2" fill="#ff6854"/>
<rect x="376" y="142" width="4" height="2" fill="#ff6854"/>
<rect x="384" y="142" width="4" height="2" fill="#ff6854"/>
<rect x="393" y="142" width="4" height="2" fill="#ff6854"/>
<rect x="401" y="142" width="4" height="2" fill="#ff6854"/>
<rect x="410" y="142" width="4" height="2" fill="#ff6854"/>
<rect x="418" y="142" width="4" height="2" fill="#ff6854"/>
<rect x="427" y="142" width="4" height="2" fill="#ff6854"/>
<rect x="436" y="142" width="4" height="2" fill="#ff6854"/>
<rect x="444" y="142" width="4" height="2" fill="#ff6854"/>
<rect x="453" y="142" width="4" height="2" fill="#ff6854"/>
<rect x="461" y="142" width="4" height="2" fill="#ff6854"/>
</g></svg>
<div class="abs" style="left:245.8px;top:514.4px;width:10px;height:10px;background:#447fb3"></div>
<div class="abs" style="left:261.3px;top:513.5px;font-size:10px;line-height:12px">Hits</div>
<div class="abs" style="left:345.8px;top:514.4px;width:10px;height:10px;background:#ff6854"></div>
<div class="abs" style="left:361.3px;top:513.5px;font-size:10px;line-height:12px">Visitors</div>
<div class="abs" style="left:792px;top:514.4px;width:10px;height:10px;background:#447fb3"></div>
<div class="abs" style="left:807.2px;top:513.5px;font-size:10px;line-height:12px">Hits</div>
<div class="abs" style="left:892px;top:514.4px;width:10px;height:10px;background:#ff6854"></div>
<div class="abs" style="left:907.5px;top:513.5px;font-size:10px;line-height:12px">Visitors</div>

<div class="abs" style="left:98px;top:540px;width:496px;height:119px;overflow:hidden">
<div class="th" style="right:457.0px">#</div>
<div class="th" style="right:376.4px">HITS</div>
<svg class="abs" style="left:122.8px;top:14px" width="7" height="10" viewBox="0 0 7 10"><path d="M0.2,3.8L3.4,0.2L6.6,3.8Z M0.2,5.2L3.4,8.9L6.6,5.2Z" fill="#333"/></svg>
<div class="th" style="right:295.7px">VISITORS</div>
<svg class="abs" style="left:203.5px;top:14px" width="7" height="10" viewBox="0 0 7 10"><path d="M0.2,3.8L3.4,0.2L6.6,3.8Z M0.2,5.2L3.4,8.9L6.6,5.2Z" fill="#333"/></svg>
<div class="th" style="right:174.6px">TX. AMOUNT</div>
<svg class="abs" style="left:324.59999999999997px;top:14px" width="7" height="10" viewBox="0 0 7 10"><path d="M0.2,3.8L3.4,0.2L6.6,3.8Z M0.2,5.2L3.4,8.9L6.6,5.2Z" fill="#333"/></svg>
<div class="th" style="right:100.2px">AVG. T.S.</div>
<svg class="abs" style="left:399.0px;top:14px" width="7" height="10" viewBox="0 0 7 10"><path d="M0.2,3.8L3.4,0.2L6.6,3.8Z M0.2,5.2L3.4,8.9L6.6,5.2Z" fill="#333"/></svg>
<div class="th" style="right:24.1px">CUM. T.S.</div>
<svg class="abs" style="left:475.09999999999997px;top:14px" width="7" height="10" viewBox="0 0 7 10"><path d="M0.2,3.8L3.4,0.2L6.6,3.8Z M0.2,5.2L3.4,8.9L6.6,5.2Z" fill="#333"/></svg>
<div class="abs" style="left:0;top:35px;width:501.9px;height:2px;background:#000"></div>
<div class="abs" style="left:0;top:37px;width:600px;height:66px;background:#f7f7f7"></div>
<div class="abs" style="left:0;top:103px;width:600px;height:2px;background:#000"></div>
<div class="abs" style="left:47.0px;top:106px;width:1px;height:20px;background:#ddd"></div>
<div class="abs" style="left:138.1px;top:106px;width:1px;height:20px;background:#ddd"></div>
<div class="abs" style="left:218.9px;top:106px;width:1px;height:20px;background:#ddd"></div>
<div class="abs" style="left:340.2px;top:106px;width:1px;height:20px;background:#ddd"></div>
<div class="abs" style="left:414.1px;top:106px;width:1px;height:20px;background:#ddd"></div>
<div class="abs" style="left:490.2px;top:106px;width:1px;height:20px;background:#ddd"></div>
<div class="td b" style="top:41px;right:457.0px">MIN.</div>
<div class="td" style="top:41px;right:366.4px">200 <span class="g">(0.24%)</span></div>
<div class="td" style="top:41px;right:285.7px">9 <span class="g">(0.04%)</span></div>
<div class="td" style="top:41px;right:164.6px">1.16 MiB <span class="g">(0.00%)</span></div>
<div class="td" style="top:41px;right:90.2px">—</div>
<div class="td" style="top:41px;right:14.1px">4.53 s</div>
<div class="td b" style="top:63.3px;right:457.0px">MAX.</div>
<div class="td" style="top:63.3px;right:366.4px">1,161 <span class="g">(1.38%)</span></div>
<div class="td" style="top:63.3px;right:285.7px">178 <span class="g">(0.89%)</span></div>
<div class="td" style="top:63.3px;right:164.6px">5.09 GiB <span class="g">(2.91%)</span></div>
<div class="td" style="top:63.3px;right:90.2px">—</div>
<div class="td" style="top:63.3px;right:14.1px">6.12 m</div>
<div class="td b" style="top:85.0px;right:457.0px">AVG.</div>
<div class="td" style="top:85.0px;right:366.4px">544 <span class="g">(0.64%)</span></div>
<div class="td" style="top:85.0px;right:285.7px">129 <span class="g">(0.64%)</span></div>
<div class="td" style="top:85.0px;right:164.6px">1.13 GiB <span class="g">(0.65%)</span></div>
<div class="td" style="top:85.0px;right:90.2px">99.94 ms</div>
<div class="td" style="top:85.0px;right:14.1px">54.41 s</div>
<div class="td b" style="top:114.2px;right:457.0px">1</div>
<div class="td" style="top:114.2px;right:366.4px">267 <span class="g">(0.32%)</span></div>
<div class="td" style="top:114.2px;right:285.7px">9 <span class="g">(0.04%)</span></div>
<div class="td" style="top:114.2px;right:164.6px">1.42 MiB <span class="g">(0.00%)</span></div>
<div class="td" style="top:114.2px;right:90.2px">33.10 ms</div>
<div class="td" style="top:114.2px;right:14.1px">5.00 s</div>
</div>
<div class="abs" style="left:644px;top:540px;width:495px;height:119px;overflow:hidden">
<div class="th" style="right:457.0px">#</div>
<div class="th" style="right:362.9px">HITS</div>
<svg class="abs" style="left:135.5px;top:16.8px" width="7" height="4" viewBox="0 0 7 4"><path d="M0,0H6.6L3.3,3.4Z" fill="#333"/></svg>
<div class="th" style="right:266.9px">VISITORS</div>
<svg class="abs" style="left:231.3px;top:14px" width="7" height="10" viewBox="0 0 7 10"><path d="M0.2,3.8L3.4,0.2L6.6,3.8Z M0.2,5.2L3.4,8.9L6.6,5.2Z" fill="#333"/></svg>
<div class="th" style="right:147.8px">TX. AMOUNT</div>
<svg class="abs" style="left:350.40000000000003px;top:14px" width="7" height="10" viewBox="0 0 7 10"><path d="M0.2,3.8L3.4,0.2L6.6,3.8Z M0.2,5.2L3.4,8.9L6.6,5.2Z" fill="#333"/></svg>
<div class="th" style="right:73.7px">AVG. T.S.</div>
<svg class="abs" style="left:424.50000000000006px;top:14px" width="7" height="10" viewBox="0 0 7 10"><path d="M0.2,3.8L3.4,0.2L6.6,3.8Z M0.2,5.2L3.4,8.9L6.6,5.2Z" fill="#333"/></svg>
<div class="th" style="right:-1.8px">CUM. T.S.</div>
<svg class="abs" style="left:500.00000000000006px;top:14px" width="7" height="10" viewBox="0 0 7 10"><path d="M0.2,3.8L3.4,0.2L6.6,3.8Z M0.2,5.2L3.4,8.9L6.6,5.2Z" fill="#333"/></svg>
<div class="abs" style="left:0;top:35px;width:526.8px;height:2px;background:#000"></div>
<div class="abs" style="left:0;top:37px;width:600px;height:66px;background:#f7f7f7"></div>
<div class="abs" style="left:0;top:103px;width:600px;height:2px;background:#000"></div>
<div class="abs" style="left:46.9px;top:106px;width:1px;height:20px;background:#ddd"></div>
<div class="abs" style="left:150.7px;top:106px;width:1px;height:20px;background:#ddd"></div>
<div class="abs" style="left:247.1px;top:106px;width:1px;height:20px;background:#ddd"></div>
<div class="abs" style="left:365.8px;top:106px;width:1px;height:20px;background:#ddd"></div>
<div class="abs" style="left:439.9px;top:106px;width:1px;height:20px;background:#ddd"></div>
<div class="td b" style="top:41px;right:457.0px">MIN.</div>
<div class="td" style="top:41px;right:352.9px">1 <span class="g">(0.00%)</span></div>
<div class="td" style="top:41px;right:256.9px">1 <span class="g">(0.00%)</span></div>
<div class="td" style="top:41px;right:137.8px">75 B <span class="g">(0.00%)</span></div>
<div class="td" style="top:41px;right:63.7px">—</div>
<div class="td" style="top:41px;right:-11.8px">89.00<span style="display:inline-block;width:15.1px"></span></div>
<div class="td b" style="top:63.3px;right:457.0px">MAX.</div>
<div class="td" style="top:63.3px;right:352.9px">12,174 <span class="g">(23.96%)</span></div>
<div class="td" style="top:63.3px;right:256.9px">2,223 <span class="g">(7.16%)</span></div>
<div class="td" style="top:63.3px;right:137.8px">43.3 MiB <span class="g">(21.69%)</span></div>
<div class="td" style="top:63.3px;right:63.7px">—</div>
<div class="td" style="top:63.3px;right:-11.8px">2.90<span style="display:inline-block;width:12.6px"></span></div>
<div class="td b" style="top:85.0px;right:457.0px">AVG.</div>
<div class="td" style="top:85.0px;right:352.9px">6 <span class="g">(0.01%)</span></div>
<div class="td" style="top:85.0px;right:256.9px">3 <span class="g">(0.01%)</span></div>
<div class="td" style="top:85.0px;right:137.8px">25.88 KiB <span class="g">(0.01%)</span></div>
<div class="td" style="top:85.0px;right:63.7px">95.25 ms</div>
<div class="td" style="top:85.0px;right:-11.8px">612.47 ms</div>
<div class="td b" style="top:114.2px;right:457.0px">1</div>
<div class="td" style="top:114.2px;right:352.9px">12,174 <span class="g">(14.42%)</span></div>
<div class="td" style="top:114.2px;right:256.9px">2,223 <span class="g">(11.08%)</span></div>
<div class="td" style="top:114.2px;right:137.8px">43.3 MiB <span class="g">(0.03%)</span></div>
<div class="td" style="top:114.2px;right:63.7px">14.30 ms</div>
<div class="td" style="top:114.2px;right:-11.8px">2.90 s</div>
</div>
<!-- scrollbar -->
<div class="abs" style="left:1161px;top:1px;width:17px;height:658px;background:#f1f1f1"></div>
<div class="abs" style="left:1164px;top:16px;width:14px;height:73px;background:#cdcdcd"></div>
<svg class="abs" style="left:1166px;top:3px" width="11" height="10" viewBox="0 0 11 10"><path d="M2.6,8.4L5.5,4.3L8.4,8.4" fill="none" stroke="#a3a3a3" stroke-width="2"/></svg>
<svg class="abs" style="left:1166px;top:652px" width="11" height="8" viewBox="0 0 11 8"><path d="M2.6,4L5.5,8.1L8.4,4" fill="none" stroke="#505050" stroke-width="2"/></svg>
</body></html>
